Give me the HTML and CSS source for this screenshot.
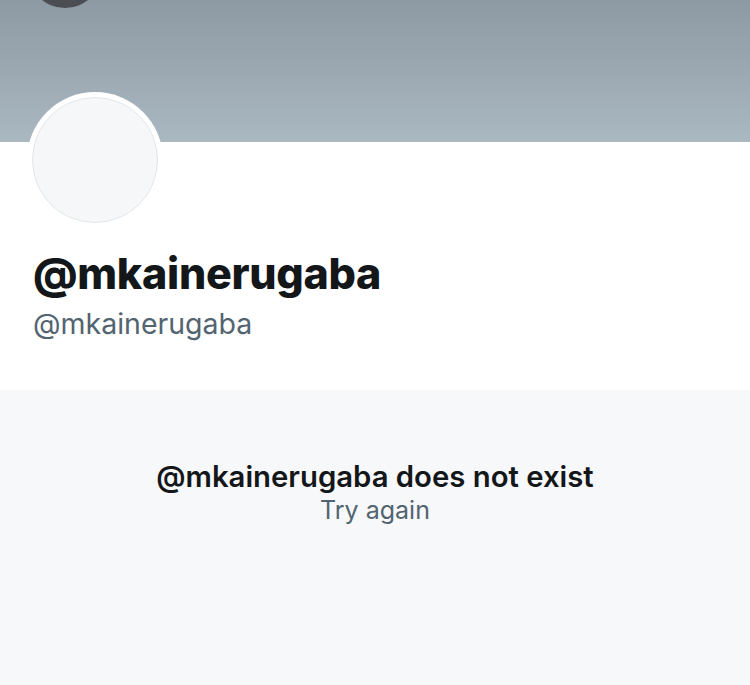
FILE: index.html
```html
<!DOCTYPE html>
<html>
<head>
<meta charset="utf-8">
<link rel="stylesheet" href="styles.css">
</head>
<body>
<div class="page">
  <header class="banner">
    <div class="back-btn"></div>
  </header>
  <section class="profile">
    <div class="avatar"><div class="avatar-inner"></div></div>
    <h1 class="name">@mkainerugaba</h1>
    <div class="handle">@mkainerugaba</div>
  </section>
  <section class="empty">
    <div class="empty-title">@mkainerugaba does not exist</div>
    <div class="empty-sub">Try again</div>
  </section>
</div>
</body>
</html>
```
FILE: styles.css
```css
html, body {
  margin: 0;
  padding: 0;
  background: #f7f8fa;
  font-family: Inter, "Noto Sans", sans-serif;
}
.page {
  width: 750px;
  height: 685px;
  overflow: hidden;
  display: flex;
  flex-direction: column;
}
.banner {
  position: relative;
  height: 142px;
  flex: none;
  background: linear-gradient(#8d99a3, #aab8c2);
  overflow: hidden;
}
.back-btn {
  position: absolute;
  left: 28px;
  top: -66px;
  width: 74px;
  height: 74px;
  border-radius: 50%;
  background: #4a4e53;
}
.profile {
  background: #fff;
  height: 248px;
  flex: none;
  padding: 0 33px;
  box-sizing: border-box;
}
.avatar {
  position: relative;
  z-index: 1;
  width: 136px;
  height: 136px;
  margin: -50px 0 0 -6px;
  border-radius: 50%;
  background: #fff;
  display: flex;
  align-items: center;
  justify-content: center;
}
.avatar-inner {
  width: 124px;
  height: 124px;
  border-radius: 50%;
  background: #f5f7f9;
  border: 1px solid #e3e6e9;
}
.name {
  margin: 19px 0 0;
  font-size: 43px;
  line-height: 52px;
  font-weight: 800;
  color: #14171a;
  letter-spacing: -0.3px;
}
.handle {
  margin-top: 8px;
  font-size: 28.5px;
  line-height: 34px;
  color: #536471;
}
.empty {
  flex: 1;
  background: #f7f8fa;
  text-align: center;
  padding-top: 69px;
}
.empty-title {
  font-size: 29.3px;
  line-height: 36px;
  font-weight: 600;
  color: #14171a;
}
.empty-sub {
  font-size: 25px;
  line-height: 30px;
  color: #536471;
}
```
